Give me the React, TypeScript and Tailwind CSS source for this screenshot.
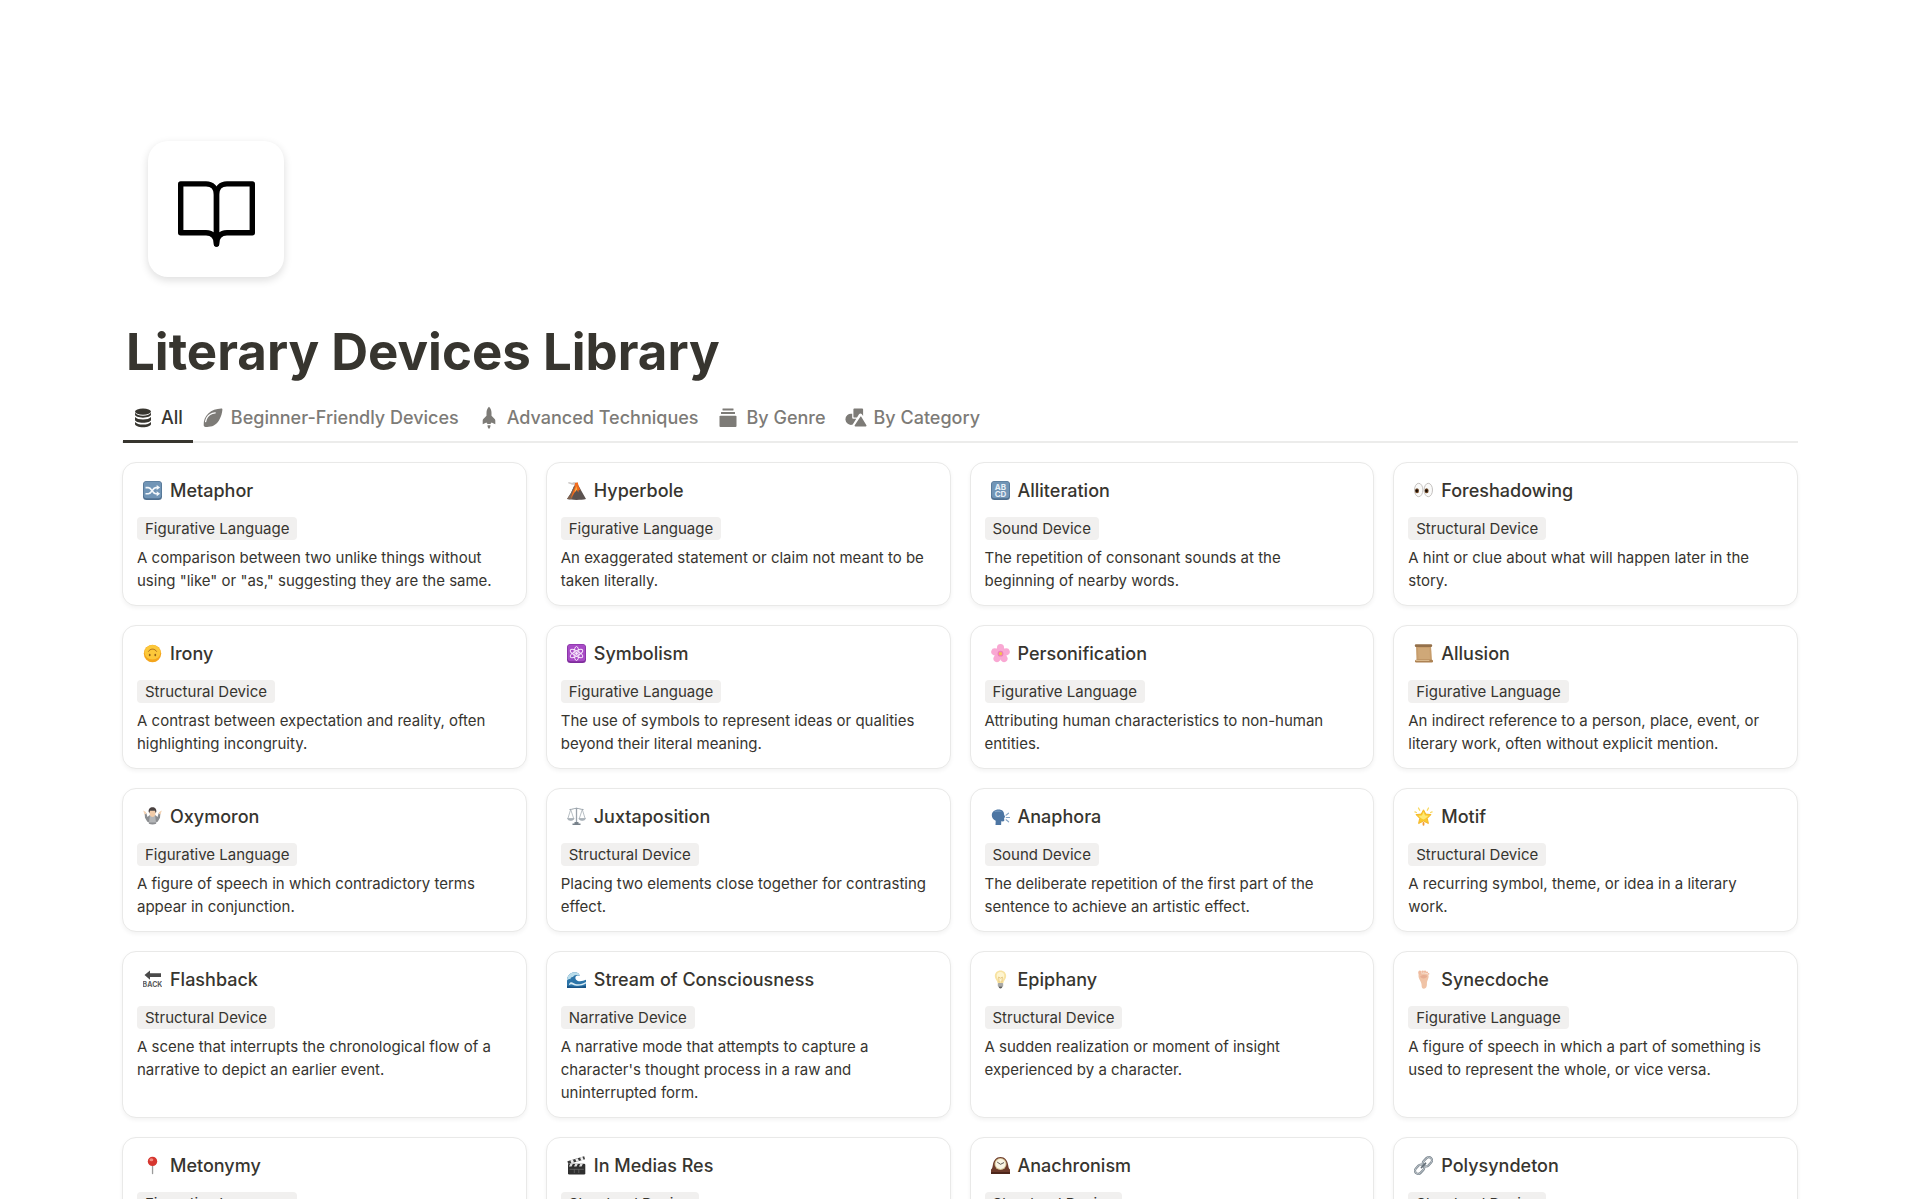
import { useState, type ReactNode } from "react";

interface Device {
  name: string;
  icon: ReactNode;
  category: string;
  description?: string;
}

interface Tab {
  label: string;
  icon: ReactNode;
}

/* Tab icons, drawn on a 20x20 grid */

const DatabaseIcon = (
  <>
    <ellipse cx="10" cy="3.6" rx="8" ry="3.1" />
    <path d="M2 4.8v1.8c0 1.8 3.6 3.1 8 3.1s8-1.3 8-3.1V4.800c-1.400 1.900-4.400 2.900-8 2.900S3.400 6.700 2 4.800z" />
    <path d="M2 9v2.700c0 1.800 3.600 3.100 8 3.100s8-1.300 8-3.100V9c-1.400 1.700-4.400 2.500-8 2.500S3.400 10.700 2 9z" />
    <path d="M2 14v2.100c0 1.900 3.600 3.200 8 3.200s8-1.300 8-3.200V14c-1.400 1.700-4.400 2.600-8 2.600S3.400 15.700 2 14z" />
  </>
);

const LeafIcon = (
  <>
    <path d="M18.300.6c.7-.1 1.200.4 1.100 1.100-.3 3-1.100 6.400-2.700 9.400-2.300 4.600-6 7.700-11 7.700-1.200 0-2.200.4-3.200.3C1.300 18.900.6 18 .7 16.700c-.2-4 1.300-8.200 4.600-11.200C8.800 2.300 13.300.9 18.300.6z" />
    <path d="M2.600 13.600c.6-3.200 2-5.600 4.500-7.100 1.500-.9 3.200-1.400 5.100-1.600" fill="none" stroke="white" strokeWidth="1.300" strokeLinecap="round" />
  </>
);

const RocketIcon = (
  <>
    <path d="M10-1.200c1.700 1.500 2.500 3.700 2.500 6v2.900l3.200 3.400c.4.400.6.900.6 1.500v3.600l-3.700-1.700c-.5.800-1 1.500-1.600 1.500H9c-.6 0-1.100-.7-1.600-1.500l-3.700 1.700v-3.600c0-.6.200-1.100.6-1.500l3.200-3.400V4.800c0-2.300.8-4.500 2.500-6z" />
    <path d="M8.500 17.200h3c0 1.700-.6 2.900-1.500 3.800-.9-.9-1.500-2.100-1.500-3.800z" />
  </>
);

const StackIcon = (
  <>
    <rect x="4.500" y=".4" width="11" height="2" rx=".3" />
    <rect x="3" y="4" width="14" height="2" rx=".3" />
    <rect x="1.500" y="7.700" width="17" height="11.300" rx=".9" />
  </>
);

const ShapesIcon = (
  <>
    <path d="M8.300.4h7.900c.5 0 .9.400.9.900v6.600l-1.200-1.700c-.8-1.100-2.200-1-2.900 0L11 9.600H8.300c-.5 0-.9-.4-.9-.9V1.300c0-.5.400-.9.900-.9z" />
    <path d="M6.200 5.800v3.700c0 .8.500 1.300 1.300 1.300h2.800l-3.600 5.800A5.600 5.600 0 1 1 6.200 5.800z" />
    <path d="M14.200 8.900c.3-.5.900-.5 1.200 0l5 8.400c.3.600 0 1.200-.6 1.200H9.300c-.6 0-.9-.6-.6-1.200z" />
  </>
);

const tabs: Tab[] = [
  { label: "All", icon: DatabaseIcon },
  { label: "Beginner-Friendly Devices", icon: LeafIcon },
  { label: "Advanced Techniques", icon: RocketIcon },
  { label: "By Genre", icon: StackIcon },
  { label: "By Category", icon: ShapesIcon },
];

/* Card icons, drawn on a 19x19 grid */

const ShuffleTile = (
  <>
    <rect width="19" height="19" rx="3.500" fill="#4f6f8f" />
    <rect x=".7" y=".5" width="17.600" height="16.800" rx="3" fill="#7195b6" />
    <path d="M2.500 6.600h2.800c3.400 0 4.200 6.200 7.600 6.200h1.500M2.500 12.800h2.800c3.400 0 4.200-6.200 7.600-6.200h1.500" fill="none" stroke="#f4f8fb" strokeWidth="1.600" />
    <path d="M13.700 4.100l3.400 2.500-3.400 2.500zM13.700 10.300l3.400 2.500-3.400 2.500z" fill="#f4f8fb" />
  </>
);

const Volcano = (
  <>
    <path d="M1 1.500c2-.9 3 .7 4.500.3 1.800-.7 3.500-.6 4.800.7l-1 2.700C7.500 3.200 5.500 4.500 4.500 3.500 3.300 2.500 1.500 3.500 1 1.500z" fill="#c9c5c4" />
    <path d="M7.300 4.500h4.200L15 11l4 7c-5 1.200-14 1.200-19 0l4-6z" fill="#5b5250" />
    <path d="M0 18l4-6 3.300-7.500L8 9l-3 9z" fill="#7d6250" />
    <path d="M8 2l2.700-.8 1 4 1.800 4.600-1.700-1.300-.5 3-1.700-3L6 14l-2.500 4 2-6 2-5z" fill="#f26a1b" />
    <path d="M9.300 5l.8 3.500-2.600 3z" fill="#ffb648" />
  </>
);

const LettersTile = (
  <>
    <rect width="19" height="19" rx="3.500" fill="#4f6f8f" />
    <rect x=".7" y=".5" width="17.600" height="16.800" rx="3" fill="#7195b6" />
    <text x="9.500" y="8.600" textAnchor="middle" fontSize="8" fontWeight="700" fill="#e8f0f7">AB</text>
    <text x="9.500" y="15.600" textAnchor="middle" fontSize="8" fontWeight="700" fill="#e8f0f7">CD</text>
  </>
);

const Eyes = (
  <>
    <ellipse cx="4.700" cy="9" rx="4.200" ry="6.700" fill="#fafaf9" stroke="#bdbab8" strokeWidth=".9" />
    <ellipse cx="14.300" cy="9" rx="4.200" ry="6.700" fill="#fafaf9" stroke="#bdbab8" strokeWidth=".9" />
    <ellipse cx="3" cy="9.700" rx="2" ry="2.500" fill="#6b4422" />
    <ellipse cx="12.600" cy="9.700" rx="2" ry="2.500" fill="#6b4422" />
    <circle cx="2.800" cy="9.800" r="1.200" fill="#160c06" />
    <circle cx="12.400" cy="9.800" r="1.200" fill="#160c06" />
  </>
);

const UpsideDownFace = (
  <>
    <circle cx="9.500" cy="9.500" r="8.700" fill="#f4a51c" />
    <ellipse cx="9.500" cy="8.300" rx="7.900" ry="7.300" fill="#fcc83a" />
    <path d="M5.500 7.300c1.800-3 6.200-3 8 0" fill="none" stroke="#a8691a" strokeWidth="1" strokeLinecap="round" />
    <ellipse cx="6.700" cy="11" rx=".9" ry="1.300" fill="#94601a" />
    <ellipse cx="12.300" cy="11" rx=".9" ry="1.300" fill="#94601a" />
  </>
);

const AtomTile = (
  <>
    <rect width="19" height="19" rx="3.500" fill="#7f2d9c" />
    <rect x=".7" y=".5" width="17.600" height="16.800" rx="3" fill="#a84bc6" />
    <g fill="none" stroke="#f8eafc" strokeWidth="1">
      <ellipse cx="9.500" cy="9.500" rx="2.500" ry="7" />
      <ellipse cx="9.500" cy="9.500" rx="2.500" ry="7" transform="rotate(60 9.500 9.500)" />
      <ellipse cx="9.500" cy="9.500" rx="2.500" ry="7" transform="rotate(120 9.500 9.500)" />
    </g>
    <circle cx="9.500" cy="9.500" r="1.400" fill="#f8eafc" />
  </>
);

const Blossom = (
  <>
    <g fill="#f9a8d3">
      <ellipse cx="9.500" cy="4.300" rx="3.600" ry="4.200" />
      <ellipse cx="9.500" cy="4.300" rx="3.600" ry="4.200" transform="rotate(72 9.500 9.700)" />
      <ellipse cx="9.500" cy="4.300" rx="3.600" ry="4.200" transform="rotate(144 9.500 9.700)" />
      <ellipse cx="9.500" cy="4.300" rx="3.600" ry="4.200" transform="rotate(216 9.500 9.700)" />
      <ellipse cx="9.500" cy="4.300" rx="3.600" ry="4.200" transform="rotate(288 9.500 9.700)" />
    </g>
    <circle cx="9.500" cy="9.700" r="2.900" fill="#f07fb6" />
    <circle cx="9.500" cy="9.700" r="1.600" fill="#f2c14c" />
  </>
);

const Scroll = (
  <>
    <path d="M2 2h15l1 14.500H2.500z" fill="#c79d6c" />
    <path d="M4 4h11.500l.5 11H4.500z" fill="#cfa878" />
    <rect x=".8" y=".3" width="17.400" height="2.600" rx="1.200" fill="#94704a" />
    <rect x="1" y="15.800" width="18" height="2.700" rx="1.300" fill="#ad8253" />
    <rect x="1.500" y="16" width="14" height="1.100" rx=".5" fill="#dab98d" />
  </>
);

const Shrug = (
  <>
    <path d="M1.600 6.200l1.700-.3 1.200 4.200 1.900-1.900h6.200l1.900 1.900 1.200-4.200 1.700.3-.4 4.500-2.300 4-1.300.2-.3 1.900c-2.200.9-5 .9-7.200 0l-.3-1.900-1.300-.2-2.300-4z" fill="#8b8d90" />
    <path d="M6.800 9h5.400l.8 6.500H6z" fill="#b3b5b7" />
    <path d="M.2 3.400l2.700 1.500.6 1.900-2 .7zM18.800 3.400l-2.700 1.500-.6 1.900 2 .7z" fill="#f3d2b3" />
    <path d="M6.500 3.500h6v3.300c0 1.900-1.400 3.200-3 3.200s-3-1.300-3-3.200z" fill="#f1cba8" />
    <path d="M5.700 5C5.200 2.200 7 .3 9.500.3s4.300 1.900 3.800 4.700l-.8 1-.5-2.200H7L6.500 6z" fill="#4a4140" />
  </>
);

const Scales = (
  <g fill="none" stroke="#9aa3ab">
    <path d="M9.500.8v15.500" strokeWidth="1.300" />
    <path d="M2.500 2.500c3 0 4.500-1.200 7-1.200s4 1.200 7 1.200" strokeWidth="1" />
    <path d="M3.700 2.500L.9 11.500M3.700 2.500l3 9M15.300 2.500l-3 9M15.300 2.500l2.800 9" strokeWidth=".7" />
    <path d="M.5 11.500h6.600c-.4 2.500-6.200 2.500-6.600 0zM11.900 11.500h6.600c-.4 2.500-6.200 2.500-6.600 0z" fill="#aab3ba" strokeWidth=".6" />
    <path d="M5.500 17.200h8M7.500 15.800h4" stroke="#77818a" strokeWidth="1.400" />
  </g>
);

const SpeakingHead = (
  <>
    <path d="M7.500 2.500c4 0 5.700 2.200 5.500 4.800l1.200 2.900-1.100.6.2 2.700c-.2 1-1.600 1-3 .8l-.2 3.700H4.500l.2-4.300C2.300 12.800.8 10.600.8 8.200c0-3.400 3-5.700 6.700-5.700z" fill="#4d76a3" />
    <path d="M3 5c2-1.800 6-1.800 8-.2-2.500-.2-5 0-8 .2z" fill="#7196bd" />
    <path d="M15 8.200l2.500-2M15.300 10.500h3.300M15.100 12.800l2.500 2" fill="none" stroke="#86a5c4" strokeWidth="1.100" strokeLinecap="round" />
  </>
);

const GlowingStar = (
  <>
    <path d="M9.500 2.800l2.300 4.300 5.200.5-3.700 3.700 1.100 5.200-4.900-2.400-4.900 2.400 1.100-5.200L2 7.600l5.200-.5z" fill="#fac92c" stroke="#f5b82a" strokeWidth="1" strokeLinejoin="round" />
    <path d="M9.500 4.800l1.500 3.600 3.500.4-2.700 2.400-2.300 1.300-2.500-1.300-2.500-2.400 3.500-.4z" fill="#ffe973" />
    <path d="M4.500 1l1.200 2.200M14.500 1l-1.200 2.200M.9 4.900l1.500.6M18.100 4.900l-1.500.6" fill="none" stroke="#f9d95c" strokeWidth="1.300" strokeLinecap="round" />
    <path d="M9.500 16v1.800" fill="none" stroke="#f0983a" strokeWidth="1.800" strokeLinecap="round" />
  </>
);

const BackArrow = (
  <>
    <path d="M1.500 5.100L7 .6v2.600h11v3.900H7v2.600z" fill="#4a4a4a" />
    <text x="9.500" y="17.200" textAnchor="middle" fontSize="7" fontWeight="700" fill="#5c5c5c">BACK</text>
  </>
);

const Wave = (
  <>
    <path d="M0 18V9C1.200 4 5.500 1.500 9.500 2.600c1.800.5 3 1.800 3.200 3.400-1.500-.9-3.200-.7-4 .6-1 2 .6 4.300 3.100 4.600 2.700.3 5-.5 7.200-1.400V18z" fill="#2c74a8" />
    <path d="M0 9C1.200 4 5.500 1.500 9.500 2.600c1.800.5 3 1.800 3.200 3.400C9.500 4 7 5 6 7c-1.500-.4-2.500.8-2.700 2.300C2.200 8.600 1 9 0 10.500z" fill="#b9dcea" />
    <path d="M2 14c2.500-3.500 4-.5 6.500 0 3 .8 6.500.3 10.500-2v1.600c-3.500 2-7.500 2.800-11 1.900-2.200-.6-3.500-2.300-6-.5z" fill="#d8ecf4" />
    <path d="M0 15.800c6 1.200 13 1.200 19 0V18H0z" fill="#195486" />
  </>
);

const Bulb = (
  <>
    <path d="M9.500.4c3.400 0 5.700 2.400 5.700 5.600 0 3-2.500 4.300-2.900 7.300H6.700C6.300 10.300 3.800 9 3.800 6c0-3.200 2.300-5.600 5.700-5.600z" fill="#f8e3a2" />
    <path d="M9.500 2c2.300 0 3.800 1.600 3.800 3.800 0 2.300-1.700 3.200-2.200 5.400H7.900C7.400 9 5.700 8.100 5.700 5.800 5.700 3.600 7.200 2 9.500 2z" fill="#fef5d0" />
    <path d="M8.200 12.500L7.600 7l1.900 1.200L11.400 7l-.6 5.500" fill="none" stroke="#dfb968" strokeWidth=".7" />
    <rect x="6.800" y="13" width="5.400" height="3.700" rx=".7" fill="#a9a9a6" />
    <path d="M7.700 16.500h3.600c0 1.300-.8 2-1.800 2s-1.800-.7-1.800-2z" fill="#5d5d5b" />
  </>
);

const Foot = (
  <>
    <path d="M4.600 4.500C6.500 3 12 2.600 14 4.600c1.300 1.600.4 3.900-.5 5.900-.7 1.500-.6 2.700-.6 4.100 0 2.300-1 4.100-2.900 4.100-1.900 0-2.500-1.700-2.400-3.800C7.700 11.500 3.800 8.800 4.600 4.500z" fill="#f0c3a6" />
    <path d="M6.200 6.200c2-1.400 5.200-1.800 6.800-.4.500 1.500-1.500 2.600-3.500 2.600-1.600 0-3-.8-3.300-2.200z" fill="#e7ad92" />
    <ellipse cx="5.900" cy="2.800" rx="1.700" ry="2.200" fill="#efbb9f" />
    <circle cx="8.700" cy="1.700" r="1.300" fill="#efbb9f" />
    <circle cx="11" cy="1.800" r="1.200" fill="#efbb9f" />
    <circle cx="13" cy="2.500" r="1.100" fill="#efbb9f" />
    <circle cx="14.500" cy="3.800" r=".9" fill="#efbb9f" />
  </>
);

const Pin = (
  <>
    <rect x="8.900" y="9" width="1.300" height="9.200" rx=".6" fill="#9b9b9b" />
    <circle cx="9.500" cy="5.400" r="4.700" fill="#d6362f" />
    <ellipse cx="8.400" cy="3.800" rx="1.900" ry="1.500" fill="#f28a80" />
  </>
);

const Clapper = (
  <>
    <path d="M.4 5.200L17.200.3l.8 3L1.300 8.100z" fill="#3b3b3b" />
    <path d="M3.300 4.400l2.500-.8 1.300 2.800-2.600.8zM8.200 2.900l2.500-.7 1.300 2.800-2.600.7zM13 1.500l2.400-.7 1.300 2.900-2.500.7z" fill="#ececec" />
    <rect x="1" y="7.800" width="17.300" height="10.700" rx="1.300" fill="#2f2f2f" />
    <path d="M3.300 7.800h2.600l-1.300 2.700H2zM8.300 7.800h2.600l-1.300 2.700H7zM13.300 7.800h2.600l-1.300 2.700H12z" fill="#dedede" />
    <path d="M2.500 13.300h14.300M7.300 13.300V17M11.800 13.300V17" stroke="#6f6f6f" strokeWidth=".7" />
  </>
);

const MantelClock = (
  <>
    <path d="M0 18v-4.600c1.300-.8 1.500-2.400 1.800-4.200C2.500 4.200 5.300 1 9.500 1s7 3.200 7.700 8.200c.3 1.800.5 3.400 1.800 4.200V18z" fill="#6d3b2b" />
    <rect y="16" width="19" height="2" fill="#4d261b" />
    <circle cx="9.500" cy="8" r="6" fill="#d5c294" />
    <circle cx="9.500" cy="8" r="5" fill="#f9f4e4" />
    <path d="M6.500 6.300l3 2 3.200-1.600" fill="none" stroke="#4b4640" strokeWidth=".9" strokeLinecap="round" />
  </>
);

const Link = (
  <g fill="none">
    <g stroke="#7d8891" strokeWidth="2.300">
      <rect x="8.200" y="2.600" width="10.400" height="6.400" rx="3.200" transform="rotate(-47 13.400 5.800)" />
      <rect x=".4" y="10" width="10.400" height="6.400" rx="3.200" transform="rotate(-47 5.600 13.200)" />
    </g>
    <g stroke="#c9d0d5" strokeWidth=".8">
      <rect x="8.200" y="2.600" width="10.400" height="6.400" rx="3.200" transform="rotate(-47 13.400 5.800)" />
      <rect x=".4" y="10" width="10.400" height="6.400" rx="3.200" transform="rotate(-47 5.600 13.200)" />
    </g>
    <path d="M7.500 11.500l4-4.200" stroke="#626d76" strokeWidth="1.800" strokeLinecap="round" />
  </g>
);

const devices: Device[] = [
  { name: "Metaphor", icon: ShuffleTile, category: "Figurative Language", description: 'A comparison between two unlike things without using "like" or "as," suggesting they are the same.' },
  { name: "Hyperbole", icon: Volcano, category: "Figurative Language", description: "An exaggerated statement or claim not meant to be taken literally." },
  { name: "Alliteration", icon: LettersTile, category: "Sound Device", description: "The repetition of consonant sounds at the beginning of nearby words." },
  { name: "Foreshadowing", icon: Eyes, category: "Structural Device", description: "A hint or clue about what will happen later in the story." },
  { name: "Irony", icon: UpsideDownFace, category: "Structural Device", description: "A contrast between expectation and reality, often highlighting incongruity." },
  { name: "Symbolism", icon: AtomTile, category: "Figurative Language", description: "The use of symbols to represent ideas or qualities beyond their literal meaning." },
  { name: "Personification", icon: Blossom, category: "Figurative Language", description: "Attributing human characteristics to non-human entities." },
  { name: "Allusion", icon: Scroll, category: "Figurative Language", description: "An indirect reference to a person, place, event, or literary work, often without explicit mention." },
  { name: "Oxymoron", icon: Shrug, category: "Figurative Language", description: "A figure of speech in which contradictory terms appear in conjunction." },
  { name: "Juxtaposition", icon: Scales, category: "Structural Device", description: "Placing two elements close together for contrasting effect." },
  { name: "Anaphora", icon: SpeakingHead, category: "Sound Device", description: "The deliberate repetition of the first part of the sentence to achieve an artistic effect." },
  { name: "Motif", icon: GlowingStar, category: "Structural Device", description: "A recurring symbol, theme, or idea in a literary work." },
  { name: "Flashback", icon: BackArrow, category: "Structural Device", description: "A scene that interrupts the chronological flow of a narrative to depict an earlier event." },
  { name: "Stream of Consciousness", icon: Wave, category: "Narrative Device", description: "A narrative mode that attempts to capture a character's thought process in a raw and uninterrupted form." },
  { name: "Epiphany", icon: Bulb, category: "Structural Device", description: "A sudden realization or moment of insight experienced by a character." },
  { name: "Synecdoche", icon: Foot, category: "Figurative Language", description: "A figure of speech in which a part of something is used to represent the whole, or vice versa." },
  { name: "Metonymy", icon: Pin, category: "Figurative Language" },
  { name: "In Medias Res", icon: Clapper, category: "Structural Device" },
  { name: "Anachronism", icon: MantelClock, category: "Structural Device" },
  { name: "Polysyndeton", icon: Link, category: "Structural Device" },
];

function PageIcon() {
  return (
    <div className="ml-[26px] flex size-[136px] items-center justify-center rounded-[20px] bg-white shadow-[0_3px_8px_rgba(15,15,15,0.14)]">
      <svg
        width="77"
        height="66"
        viewBox="0 0 77 66"
        fill="none"
        stroke="black"
        strokeWidth="5.400"
        strokeLinecap="round"
        strokeLinejoin="round"
        className="mt-[10px]"
        aria-hidden="true"
      >
        <path d="M38.500 63V14C38.500 7 34 2.900 28 2.900H2.700V51.800H28C34.500 51.800 38.500 56 38.500 63z" />
        <path d="M38.500 63V14C38.500 7 43 2.900 49 2.900H74.300V51.800H49C42.500 51.800 38.500 56 38.500 63z" />
      </svg>
    </div>
  );
}

function DeviceCard({ name, icon, category, description }: Device) {
  return (
    <a
      href="#"
      className="flex flex-col items-start rounded-[14px] border border-[#e9e9e8] bg-white px-[14px] pt-4 pb-[13px] shadow-[0_2px_4px_rgba(15,15,15,0.05)] transition-colors hover:bg-stone-50"
    >
      <h2 className="flex items-center gap-2 pl-[6px] text-[18px] leading-6 font-medium">
        <svg width="19" height="19" viewBox="0 0 19 19" className="mb-[2px] shrink-0" aria-hidden="true">
          {icon}
        </svg>
        {name}
      </h2>
      <span className="mt-[14px] rounded-[4px] bg-[#f1f0ef] px-2 text-[15px] leading-[23px]">
        {category}
      </span>
      <p className="mt-[6px] min-h-[46px] pr-2 text-[15px] leading-[23px]">{description}</p>
    </a>
  );
}

export default function App() {
  const [active, setActive] = useState("All");

  return (
    <main className="min-h-screen bg-white px-[122px] pt-[141px] pb-12 font-['Inter',sans-serif] text-[#37352f]">
      <PageIcon />
      <h1 className="mt-[43px] pl-1 text-[51px] leading-[64px] font-bold">Literary Devices Library</h1>

      {/* View tabs */}
      <div role="tablist" className="mt-[8px] flex border-b-2 border-[#ececeb] pl-px">
        {tabs.map((tab) => {
          const selected = tab.label === active;
          return (
            <button
              key={tab.label}
              role="tab"
              aria-selected={selected}
              onClick={() => setActive(tab.label)}
              className={`-mb-[2px] flex h-[51px] items-center gap-2 border-b-[3px] px-[10px] pt-1 text-[18px] leading-6 font-medium ${
                selected ? "border-[#37352f] text-[#37352f]" : "border-transparent text-[#7d7b77]"
              }`}
            >
              <svg width="20" height="20" viewBox="0 0 20 20" fill="currentColor" className="overflow-visible" aria-hidden="true">
                {tab.icon}
              </svg>
              {tab.label}
            </button>
          );
        })}
      </div>

      {/* Gallery */}
      <div className="mt-[19px] grid grid-cols-4 gap-[19px]">
        {devices.map((device) => (
          <DeviceCard key={device.name} {...device} />
        ))}
      </div>
    </main>
  );
}
